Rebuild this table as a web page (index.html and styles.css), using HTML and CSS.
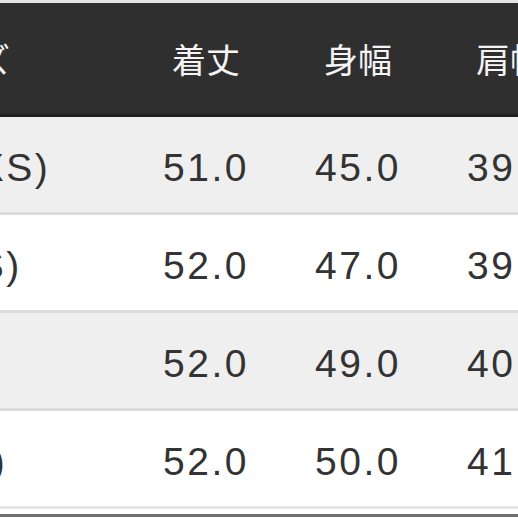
FILE: index.html
```html
<!DOCTYPE html>
<html lang="ja">
<head>
<meta charset="utf-8">
<link rel="stylesheet" href="styles.css">
</head>
<body>
<div class="strip"></div>
<div class="frame">
  <table class="size-table">
    <colgroup>
      <col class="c-name">
      <col class="c-val">
      <col class="c-val">
      <col class="c-val">
    </colgroup>
    <thead>
      <tr>
        <th class="name-h">サイズ</th>
        <th>着丈</th>
        <th>身幅</th>
        <th>肩幅</th>
      </tr>
    </thead>
    <tbody>
      <tr class="odd">
        <td class="name">1(XS)</td>
        <td>51.0</td>
        <td>45.0</td>
        <td>39.0</td>
      </tr>
      <tr class="even">
        <td class="name">2(S)</td>
        <td>52.0</td>
        <td>47.0</td>
        <td>39.5</td>
      </tr>
      <tr class="odd">
        <td class="name">M</td>
        <td>52.0</td>
        <td>49.0</td>
        <td>40.5</td>
      </tr>
      <tr class="even last">
        <td class="name name-short">(L)</td>
        <td>52.0</td>
        <td>50.0</td>
        <td>41.5</td>
      </tr>
    </tbody>
  </table>
  <div class="tail"></div>
</div>
</body>
</html>
```

FILE: styles.css
```css
html, body {
  margin: 0;
  padding: 0;
  background: #ffffff;
  width: 518px;
  height: 518px;
  overflow: hidden;
}

.strip {
  height: 3px;
  background: #e4e4e4;
}

.frame {
  width: 518px;
  overflow: hidden;
}

.size-table {
  border-collapse: collapse;
  table-layout: fixed;
  width: 756px;
  margin-left: -170px;
  font-family: "Liberation Sans", "Noto Sans CJK JP", sans-serif;
}

.c-name { width: 300px; }
.c-val { width: 152px; }

.size-table th {
  height: 111px;
  padding: 0;
  background: #2f2f2f;
  color: #f4f4f4;
  font-family: "Noto Sans CJK JP", sans-serif;
  font-size: 34px;
  font-weight: 400;
  text-align: center;
  border-bottom: 3px solid #1f1f1f;
  white-space: nowrap;
  line-height: 1;
}

.size-table th.name-h {
  text-align: right;
  padding-right: 120px;
}

.size-table td {
  height: 98px;
  padding: 6px 0 0 0;
  box-sizing: border-box;
  font-size: 39px;
  letter-spacing: 2.5px;
  color: #333333;
  text-align: center;
  border-bottom: 3px solid #dcdcdc;
  white-space: nowrap;
  line-height: 1;
}

.size-table td.name {
  text-align: left;
  padding-left: 108px;
}

.size-table td.name-short {
  padding-left: 122px;
}

.odd td { background: #efefef; }
.even td { background: #ffffff; }
.last td { border-bottom-color: #e6e6e6; }

.tail {
  height: 5px;
  background: #ffffff;
  border-bottom: 3px solid #707070;
}
```
